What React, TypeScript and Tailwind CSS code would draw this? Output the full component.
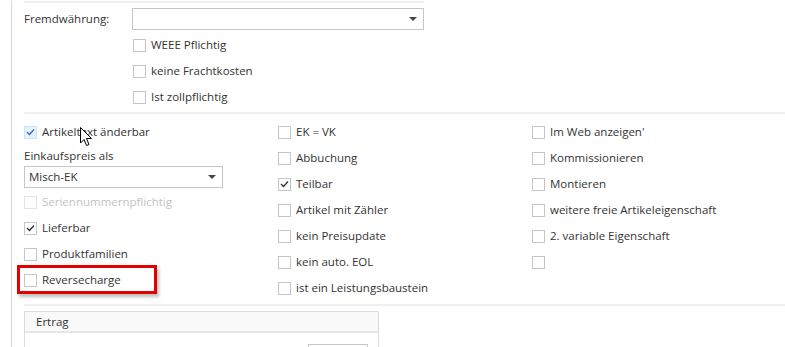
import React from "react";

const font = { fontFamily: '"Open Sans", "Noto Sans", sans-serif' };

function Box({ checked, hover, disabled }: { checked?: boolean; hover?: boolean; disabled?: boolean }) {
  const cls = hover
    ? "border-[#cce4f7] bg-[#e5f1fb]"
    : disabled
    ? "border-[#e3e3e3] bg-white"
    : "border-[#c6c6c6] bg-white";
  return (
    <div className={`w-[13px] h-[13px] border ${cls} flex items-center justify-center shrink-0`}>
      {checked && (
        <svg width="9" height="8" viewBox="0 0 9 8">
          <path d="M1 4 L3.5 6.5 L8 1.5" fill="none" stroke={hover ? "#2a70b8" : "#333"} strokeWidth="1.3" />
        </svg>
      )}
    </div>
  );
}

function Check({ label, checked, hover, disabled }: { label?: string; checked?: boolean; hover?: boolean; disabled?: boolean }) {
  return (
    <div className="h-[26px] flex items-center gap-[5px]">
      <Box checked={checked} hover={hover} disabled={disabled} />
      {label && <span className={disabled ? "text-[#c2c2c2]" : "text-[#333]"}>{label}</span>}
    </div>
  );
}

function Caret() {
  return (
    <svg width="8" height="4" viewBox="0 0 8 4">
      <path d="M0 0 H8 L4 4 Z" fill="#444" />
    </svg>
  );
}

export default function App() {
  return (
    <div className="w-[785px] h-[347px] bg-white overflow-hidden relative text-[11.5px] leading-none" style={font}>
      <div className="pl-[11px] h-full">
        <div className="border-l border-[#d6d6d6] h-full pl-[12px]">
          <div className="w-[400px] h-[2px] bg-[#efefef] mt-[1px]" />
          <div className="flex items-center mt-[5px] h-[22px]">
            <div className="w-[108px] text-[#333]">Fremdwährung:</div>
            <div className="w-[292px] h-[22px] border border-[#c6c6c6] flex items-center justify-end pr-[6px]">
              <Caret />
            </div>
          </div>
          <div className="pl-[109px] mt-[2px]">
            <Check label="WEEE Pflichtig" />
            <Check label="keine Frachtkosten" />
            <Check label="Ist zollpflichtig" />
          </div>
          <div className="h-[2px] bg-[#efefef] mt-[2px]" />
          <div className="flex mt-[5px]">
            <div className="w-[254px]">
              <div className="relative">
                <Check label="Artikeltext änderbar" checked hover />
              </div>
              <div className="h-[21px] flex items-center text-[#333]">Einkaufspreis als</div>
              <div className="w-[199px] h-[22px] border border-[#c6c6c6] flex items-center justify-between pl-[4px] pr-[6px] text-[#333]">
                <span>Misch-EK</span>
                <Caret />
              </div>
              <div className="mt-[1px]">
                <Check label="Seriennummernpflichtig" disabled />
                <Check label="Lieferbar" checked />
                <Check label="Produktfamilien" />
                <div className="relative">
                  <Check label="Reversecharge" />
                  <div className="absolute left-[-7px] top-[-2px] w-[140px] h-[29px] border-[3px] border-[#e30000] shadow-[2px_3px_3px_rgba(0,0,0,0.25)]" />
                </div>
              </div>
            </div>
            <div className="w-[254px]">
              <Check label="EK = VK" />
              <Check label="Abbuchung" />
              <Check label="Teilbar" checked />
              <Check label="Artikel mit Zähler" />
              <Check label="kein Preisupdate" />
              <Check label="kein auto. EOL" />
              <Check label="ist ein Leistungsbaustein" />
            </div>
            <div className="flex-1">
              <Check label="Im Web anzeigen'" />
              <Check label="Kommissionieren" />
              <Check label="Montieren" />
              <Check label="weitere freie Artikeleigenschaft" />
              <Check label="2. variable Eigenschaft" />
              <Check />
            </div>
          </div>
          <div className="h-[2px] bg-[#efefef] mt-[3px]" />
          <div className="w-[355px] mt-[5px] border border-[#dcdcdc]">
            <div className="h-[21px] bg-[#f9f9f9] border-b-2 border-[#e6e6e6] flex items-center pl-[11px] text-[#333]">Ertrag</div>
            <div className="h-[30px] pt-[11px] flex justify-end pr-[10px]">
              <div className="w-[60px] h-[20px] border border-[#c6c6c6]" />
            </div>
          </div>
        </div>
      </div>
      <svg className="absolute left-[80px] top-[127px]" width="14" height="21" viewBox="0 0 14 21">
        <path d="M0.5 0.5 L0.5 16 L4 12.5 L6.5 18.5 L9 17.5 L6.5 11.5 L11.5 11.5 Z" fill="white" stroke="black" strokeWidth="1" />
      </svg>
    </div>
  );
}
